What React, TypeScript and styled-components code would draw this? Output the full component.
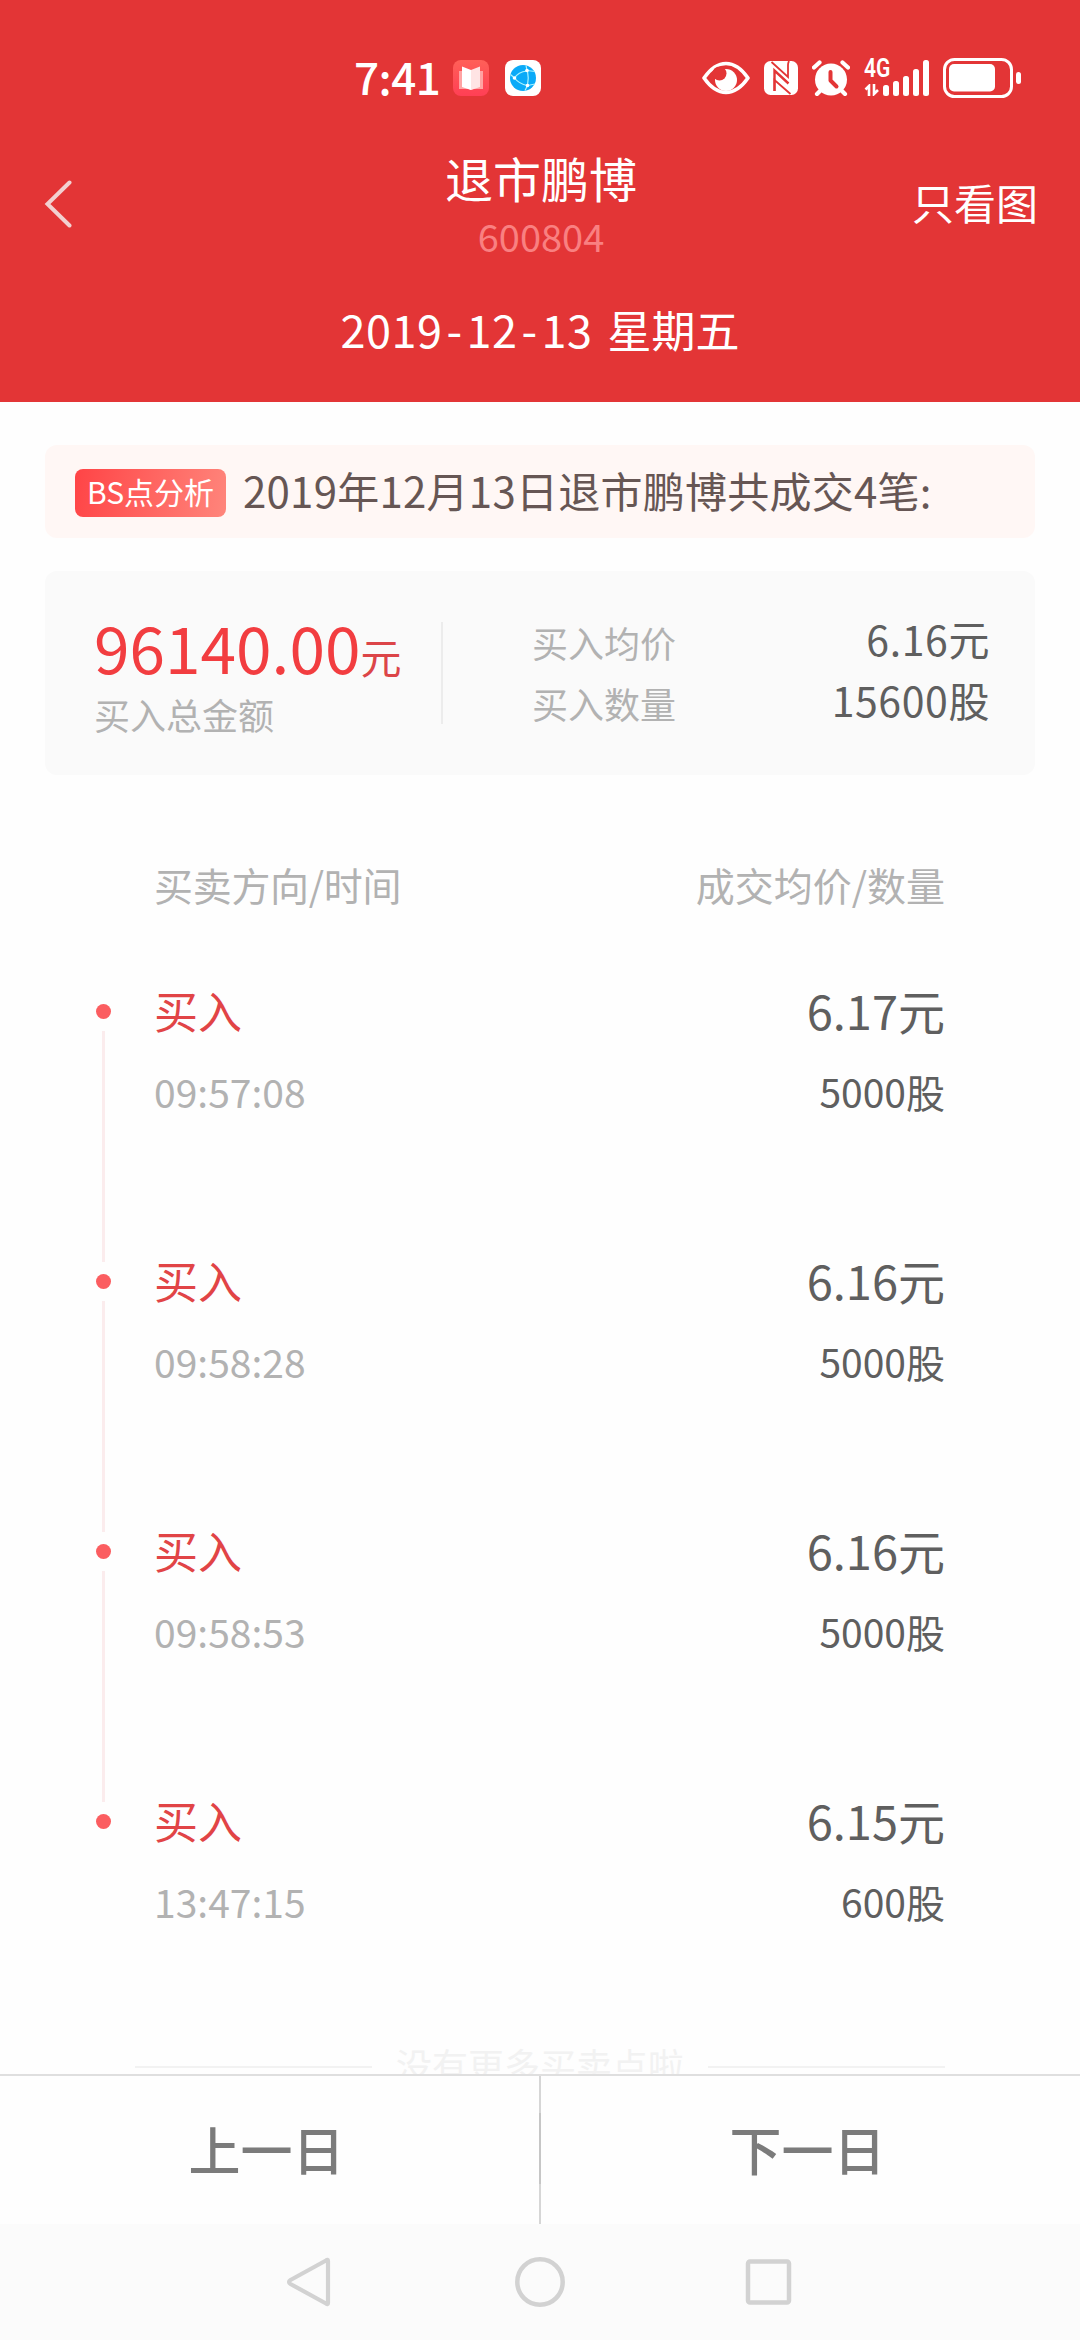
import React from 'react';
import styled, { createGlobalStyle } from 'styled-components';

const GlobalStyle = createGlobalStyle`
  * { box-sizing: border-box; }
  body {
    margin: 0;
    background: #fefefe;
    font-family: "Noto Sans CJK SC", "Noto Sans", sans-serif;
  }
`;

const Screen = styled.div`
  width: 1080px;
  height: 2340px;
  display: flex;
  flex-direction: column;
  overflow: hidden;
  background: #fefefe;
`;

const Text = styled.span<{ $size: number; $color: string; $line?: number; $weight?: number; $track?: number }>`
  display: block;
  white-space: nowrap;
  font-size: ${(p) => p.$size}px;
  line-height: ${(p) => p.$line ?? p.$size}px;
  color: ${(p) => p.$color};
  font-weight: ${(p) => p.$weight ?? 400};
  letter-spacing: ${(p) => p.$track ?? 0}px;
`;

const Header = styled.header`
  height: 402px;
  flex: none;
  background: #e33536;
  display: flex;
  flex-direction: column;
`;

const StatusBar = styled.div`
  height: 156px;
  padding: 0 59px 0 354px;
  display: flex;
  align-items: center;
  justify-content: space-between;
`;

const StatusGroup = styled.div<{ $gap: number }>`
  display: flex;
  align-items: center;
  gap: ${(p) => p.$gap}px;
`;

const Icon = styled.svg`
  display: block;
  flex: none;
`;

const Clock = styled(Text)`
  width: 83px;
  margin-bottom: 4px;
`;

const TitleBar = styled.div`
  height: 114px;
  padding: 0 42px 0 44px;
  display: grid;
  grid-template-columns: 1fr auto 1fr;
`;

const BackButton = styled.button`
  height: 48px;
  margin-top: 24px;
  padding: 0;
  border: 0;
  background: none;
  justify-self: start;
`;

const TitleBlock = styled.div`
  display: flex;
  flex-direction: column;
  align-items: center;
`;

const ChartOnly = styled.div`
  justify-self: end;
  padding-top: 16px;
`;

const DateLine = styled.div`
  display: flex;
  justify-content: center;
  gap: 15px;
  padding-top: 29px;
`;

const Dash = styled.span`
  margin: 0 4px;
`;

const Content = styled.main`
  height: 1672px;
  flex: none;
  overflow: hidden;
  padding: 43px 45px 0;
`;

const Notice = styled.section`
  height: 93px;
  border-radius: 12px;
  background: #fff7f5;
  padding: 0 30px;
  display: flex;
  align-items: center;
  gap: 17px;
`;

const NoticeText = styled(Text)`
  margin-bottom: 3px;
`;

const Badge = styled.div`
  width: 151px;
  height: 48px;
  margin-top: 3px;
  border-radius: 8px;
  background: linear-gradient(100deg, #ff4446, #ff857b);
  display: flex;
  justify-content: center;
  align-items: center;
  padding-bottom: 4px;
`;

const Summary = styled.section`
  height: 204px;
  margin-top: 33px;
  border-radius: 12px;
  background: #fafafa;
  padding: 51px 45px 0 49px;
  display: flex;
`;

const Total = styled.div`
  width: 349px;
  height: 102px;
  border-right: 2px solid #ececec;
`;

const Amount = styled.div`
  display: flex;
  align-items: baseline;
  height: 82px;
  margin-top: -8px;
`;

const Figures = styled.dl`
  flex: 1;
  margin: 0;
  padding-left: 89px;
`;

const Figure = styled.div`
  height: 61px;
  display: flex;
  justify-content: space-between;
`;

const FigureLabel = styled.dt`
  padding-top: 2px;
`;

const FigureValue = styled.dd`
  margin: -4px 0 0;
`;

const Trades = styled.section`
  padding: 84px 90px 0 51px;
`;

const ColumnHeads = styled.div`
  display: flex;
  justify-content: space-between;
  padding-left: 58px;
`;

const TradeList = styled.div`
  padding-top: 70px;
`;

const TradeRow = styled.article`
  height: 270px;
  display: grid;
  grid-template-columns: 15px 1fr auto;
  column-gap: 43px;
`;

const Rail = styled.div`
  display: flex;
  flex-direction: column;
  align-items: center;
  padding-top: 25px;
`;

const Dot = styled.i`
  width: 15px;
  height: 15px;
  border-radius: 50%;
  background: #fb5d60;
`;

const Link = styled.i`
  width: 3px;
  height: 231px;
  margin-top: 12px;
  background: #fbeced;
`;

const Cell = styled.div<{ $end?: boolean }>`
  display: flex;
  flex-direction: column;
  align-items: ${(p) => (p.$end ? 'flex-end' : 'flex-start')};
`;

const EndMark = styled.div`
  display: grid;
  grid-template-columns: 237px auto 237px;
  justify-content: space-between;
  align-items: center;
  height: 36px;
  margin: -10px 0 0 39px;
`;

const EndText = styled(Text)`
  margin-bottom: 5px;
`;

const Rule = styled.i`
  height: 2px;
  background: #f2f2f2;
`;

const Pager = styled.nav`
  height: 150px;
  flex: none;
  border-top: 2px solid #dfdfdf;
  display: flex;
  background: #fefefe;
`;

const PagerButton = styled.button`
  flex: 1;
  padding: 0 6px 2px 0;
  border: 0;
  background: none;
  font-family: inherit;
  display: flex;
  align-items: center;
  justify-content: center;
`;

const PagerDivider = styled.i`
  width: 2px;
  background: linear-gradient(#d6d6d6 25%, #c6c6c6 25%, #c6c6c6 73%, #d6d6d6 73%);
`;

const SystemNav = styled.footer`
  flex: 1;
  background: #fbfbfb;
  display: flex;
  justify-content: center;
  gap: 179px;
  padding-top: 32px;
`;

const trades = [
  { time: '09:57:08', price: '6.17元', count: '5000股' },
  { time: '09:58:28', price: '6.16元', count: '5000股' },
  { time: '09:58:53', price: '6.16元', count: '5000股' },
  { time: '13:47:15', price: '6.15元', count: '600股' },
];

const figures = [
  { label: '买入均价', value: '6.16元' },
  { label: '买入数量', value: '15600股' },
];

function BookIcon() {
  return (
    <Icon width="36" height="36" viewBox="0 0 36 36">
      <defs>
        <linearGradient id="book" x1="0" y1="0" x2="0" y2="1">
          <stop offset="0" stopColor="#ff6058" />
          <stop offset="1" stopColor="#ff3f55" />
        </linearGradient>
      </defs>
      <rect width="36" height="36" rx="8" fill="url(#book)" />
      <path d="M6 11h24v18H20l-2 1-2-1H6z" fill="#ffa3a3" />
      <path d="M9 6.500l9 3.500v20l-9-3z" fill="#fff" />
      <path d="M27 6.500l-9 3.500v20l9-3z" fill="#ffe4e4" />
    </Icon>
  );
}

function GlobeIcon() {
  return (
    <Icon width="36" height="36" viewBox="0 0 36 36">
      <rect width="36" height="36" rx="8" fill="#fff" />
      <circle cx="18" cy="18" r="13" fill="#0aaaf8" />
      <path
        d="M9.500 18Q13 12 22 11M22.500 11Q24 18 22.500 25.500M9.500 18Q14 24 22.500 25.500M22 10.500L30 11.500M22 10.500L21 5.500M22.500 25.500L30 24M22.500 25.500L20 30.500M9.500 18L5.500 14.500"
        fill="none"
        stroke="#a9f3ff"
        strokeWidth="1.200"
      />
      <circle cx="9.500" cy="18" r="1.800" fill="#fff" />
      <circle cx="22" cy="10.500" r="1.800" fill="#fff" />
      <circle cx="22.500" cy="25.500" r="1.800" fill="#fff" />
    </Icon>
  );
}

function EyeIcon() {
  return (
    <Icon width="48" height="34" viewBox="0 0 48 34">
      <path d="M2 17C9 7 16 2.500 24 2.500S39 7 46 17C39 27 32 31.500 24 31.500S9 27 2 17z" fill="none" stroke="#fff" strokeWidth="3.600" strokeLinejoin="round" />
      <circle cx="24" cy="19" r="11" fill="#fff" />
      <circle cx="17.500" cy="12.500" r="7" fill="#e33536" />
    </Icon>
  );
}

function NfcIcon() {
  return (
    <Icon width="34" height="34" viewBox="0 0 34 34">
      <rect width="34" height="34" rx="6.500" fill="#fff" />
      <path d="M7.500 1L24 16V4q0-2 1-4" fill="none" stroke="#e33536" strokeWidth="1.800" />
      <path d="M26.500 33L10.500 19v11" fill="none" stroke="#e33536" strokeWidth="1.800" />
      <path d="M10.500 30V9.500L24.500 22.500" fill="none" stroke="#e33536" strokeWidth="2.400" />
    </Icon>
  );
}

function AlarmIcon() {
  return (
    <Icon width="38" height="36" viewBox="0 0 38 36">
      <circle cx="19" cy="19.500" r="16" fill="#fff" />
      <path d="M2 7.500L7.500 2.500M36 7.500L30.500 2.500M9 30l-4 4M29 30l4 4" stroke="#fff" strokeWidth="4.200" strokeLinecap="round" />
      <path d="M18.500 12v8.500l6 6" fill="none" stroke="#e33536" strokeWidth="4" strokeLinecap="round" strokeLinejoin="round" />
    </Icon>
  );
}

const Signal = styled.div`
  display: flex;
  align-items: flex-end;
  height: 36px;
`;

const Network = styled.div`
  width: 19px;
  height: 36px;
`;

const NetworkName = styled.div`
  width: 30px;
  height: 24px;
  font: 600 25px/18px Roboto, sans-serif;
  color: #fff;
  transform: scaleX(0.84);
  transform-origin: left;
`;

const SignalBars = styled.div`
  display: flex;
  align-items: flex-end;
  gap: 4px;
`;

const Bar = styled.i<{ $h: number }>`
  width: 6px;
  height: ${(p) => p.$h}px;
  border-radius: 2.500px;
  background: #fff;
`;

function BatteryIcon() {
  return (
    <Icon width="78" height="40" viewBox="0 0 78 40">
      <rect x="1.500" y="1.500" width="67" height="37" rx="10" fill="none" stroke="#fff" strokeWidth="3" />
      <rect x="6" y="6" width="46" height="27.500" rx="5" fill="#fff" />
      <rect x="73" y="14" width="5" height="12" rx="2.500" fill="#fff" />
    </Icon>
  );
}

export default function App() {
  return (
    <Screen>
      <GlobalStyle />
      <Header>
        <StatusBar>
          <StatusGroup $gap={16}>
            <Clock $size={44} $color="#fff" $weight={500} $track={-0.5}>7:41</Clock>
            <BookIcon />
            <GlobeIcon />
          </StatusGroup>
          <StatusGroup $gap={14}>
            <EyeIcon />
            <NfcIcon />
            <AlarmIcon />
            <Signal>
              <Network>
                <NetworkName>4G</NetworkName>
                <Icon width="16" height="12" viewBox="0 0 16 12">
                  <path d="M5 12V2L1.500 5.500M10 0v10l4-4" fill="none" stroke="#fff" strokeWidth="2.600" />
                </Icon>
              </Network>
              <SignalBars>
                {[11, 15, 20, 27, 36].map((h) => <Bar key={h} $h={h} />)}
              </SignalBars>
            </Signal>
            <BatteryIcon />
          </StatusGroup>
        </StatusBar>
        <TitleBar>
          <BackButton aria-label="返回">
            <Icon width="28" height="48" viewBox="0 0 28 48">
              <path d="M25.500 2.500L3.500 24l22 21.500" fill="none" stroke="#f2d0d0" strokeWidth="4" strokeLinecap="round" />
            </Icon>
          </BackButton>
          <TitleBlock>
            <Text $size={48} $color="#fff" $line={42}>退市鹏博</Text>
            <Text $size={38} $color="#f98081" $line={75}>600804</Text>
          </TitleBlock>
          <ChartOnly>
            <Text $size={42} $color="#fff" $line={60}>只看图</Text>
          </ChartOnly>
        </TitleBar>
        <DateLine>
          <Text $size={45} $color="#fff" $line={60} $track={0.5}>
            2019<Dash>-</Dash>12<Dash>-</Dash>13
          </Text>
          <Text $size={44} $color="#fff" $line={60}>星期五</Text>
        </DateLine>
      </Header>

      <Content>
        <Notice>
          <Badge>
            <Text $size={30} $color="#fff">BS点分析</Text>
          </Badge>
          <NoticeText $size={42} $color="#665654" $track={0.25}>2019年12月13日退市鹏博共成交4笔:</NoticeText>
        </Notice>

        <Summary>
          <Total>
            <Amount>
              <Text $size={64} $color="#f23d40">96140.00</Text>
              <Text $size={41} $color="#dc4548">元</Text>
            </Amount>
            <Text $size={36} $color="#b2b2b2">买入总金额</Text>
          </Total>
          <Figures>
            {figures.map((f) => (
              <Figure key={f.label}>
                <FigureLabel><Text $size={36} $color="#b2b2b2">{f.label}</Text></FigureLabel>
                <FigureValue><Text $size={41} $color="#5f5f5f" $track={0.6}>{f.value}</Text></FigureValue>
              </Figure>
            ))}
          </Figures>
        </Summary>

        <Trades>
          <ColumnHeads>
            <Text $size={39} $color="#b2b2b2" $line={50} $track={-0.3}>买卖方向/时间</Text>
            <Text $size={39} $color="#b2b2b2" $line={50}>成交均价/数量</Text>
          </ColumnHeads>
          <TradeList>
            {trades.map((t, i) => (
              <TradeRow key={t.time}>
                <Rail>
                  <Dot />
                  {i < trades.length - 1 && <Link />}
                </Rail>
                <Cell>
                  <Text $size={44} $color="#e14446" $line={62}>买入</Text>
                  <Text $size={39} $color="#b2b2b2" $line={101}>{t.time}</Text>
                </Cell>
                <Cell $end>
                  <Text $size={47} $color="#5f5f5f" $line={62}>{t.price}</Text>
                  <Text $size={39} $color="#5f5f5f" $line={101}>{t.count}</Text>
                </Cell>
              </TradeRow>
            ))}
          </TradeList>
          <EndMark>
            <Rule />
            <EndText $size={36} $color="#f2f2f2" $line={31}>没有更多买卖点啦</EndText>
            <Rule />
          </EndMark>
        </Trades>
      </Content>

      <Pager>
        <PagerButton><Text $size={52} $color="#7b7b7b" $weight={500}>上一日</Text></PagerButton>
        <PagerDivider />
        <PagerButton><Text $size={52} $color="#7b7b7b" $weight={500}>下一日</Text></PagerButton>
      </Pager>

      <SystemNav>
        <Icon width="50" height="52" viewBox="0 0 50 52">
          <path d="M43 5v42q0 2-2 .500L5.500 28q-3-2 0-4L41 4.500q2-1.500 2 .500z" fill="none" stroke="#d2d2d2" strokeWidth="4.200" strokeLinejoin="round" />
        </Icon>
        <Icon width="52" height="52" viewBox="0 0 52 52">
          <circle cx="26" cy="26" r="22.700" fill="none" stroke="#d2d2d2" strokeWidth="4.500" />
        </Icon>
        <Icon width="50" height="52" viewBox="0 0 50 52">
          <rect x="3" y="5.500" width="41" height="41" rx="2" fill="none" stroke="#d2d2d2" strokeWidth="4.500" />
        </Icon>
      </SystemNav>
    </Screen>
  );
}
